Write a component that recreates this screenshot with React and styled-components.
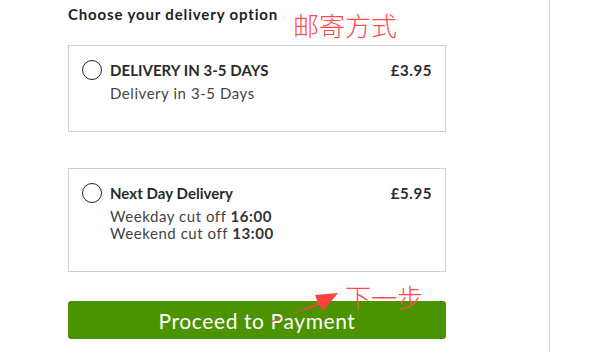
import React from 'react';
import styled, { createGlobalStyle } from 'styled-components';

const GlobalStyle = createGlobalStyle`
  html, body {
    margin: 0;
    padding: 0;
    background: #fff;
  }
  body {
    font-family: "Lato", "Liberation Sans", sans-serif;
    color: #333;
  }
`;

const Page = styled.div`
  display: flex;
  width: 606px;
  height: 352px;
  overflow: hidden;
  position: relative;
`;

const Main = styled.div`
  width: 550px;
  height: 352px;
  border-right: 1px solid #cfcfcf;
  box-sizing: border-box;
  padding: 5px 0 0 68px;
`;

const Heading = styled.h3`
  margin: 0;
  font-size: 15px;
  font-weight: 700;
  letter-spacing: 0.85px;
  color: #222;
  line-height: 18px;
`;

const Options = styled.div`
  display: flex;
  flex-direction: column;
  gap: 36px;
  width: 378px;
  margin-top: 22px;
`;

const OptionBox = styled.label`
  display: flex;
  align-items: flex-start;
  gap: 8px;
  box-sizing: border-box;
  height: ${p => p.$h}px;
  border: 1px solid #cfcfcf;
  padding: 14px 13px 0 13px;
  cursor: pointer;
`;

const Radio = styled.span`
  flex: none;
  width: 18px;
  height: 18px;
  border: 1.5px solid #222;
  border-radius: 50%;
`;

const Body = styled.div`
  flex: 1;
  display: flex;
  flex-direction: column;
`;

const TitleRow = styled.div`
  display: flex;
  justify-content: space-between;
  align-items: center;
  height: 20px;
`;

const Title = styled.span`
  font-size: 15px;
  font-weight: 700;
  color: #2a2a2a;
  letter-spacing: 0.05px;
`;

const Price = styled.span`
  font-size: 15px;
  font-weight: 700;
  color: #2a2a2a;
  letter-spacing: 0.6px;
`;

const Detail = styled.div`
  margin-top: ${p => p.$mt || 4}px;
  font-size: 15px;
  line-height: 17px;
  color: #444;
  letter-spacing: 0.55px;
  b {
    font-weight: 700;
    color: #333;
  }
`;

const Button = styled.button`
  display: block;
  width: 378px;
  height: 38px;
  margin-top: 29px;
  border: none;
  border-radius: 3px;
  background: #4b9300;
  color: #fff;
  font-family: "Lato", "Liberation Sans", sans-serif;
  font-size: 21px;
  font-weight: 400;
  letter-spacing: 0.6px;
  cursor: pointer;
`;

const Note = styled.span`
  position: absolute;
  left: ${p => p.$x}px;
  top: ${p => p.$y}px;
  font-family: "Noto Sans CJK SC", sans-serif;
  font-weight: 300;
  font-size: ${p => p.$size}px;
  line-height: 1;
  color: #ff4a4a;
  pointer-events: none;
`;

const ArrowSvg = styled.svg`
  position: absolute;
  left: 0;
  top: 0;
  pointer-events: none;
`;

function Option({ title, price, height, children }) {
  return (
    <OptionBox $h={height}>
      <Radio />
      <Body>
        <TitleRow>
          <Title>{title}</Title>
          <Price>{price}</Price>
        </TitleRow>
        {children}
      </Body>
    </OptionBox>
  );
}

export default function App() {
  return (
    <Page>
      <GlobalStyle />
      <Main>
        <Heading>Choose your delivery option</Heading>
        <Options>
          <Option title="DELIVERY IN 3-5 DAYS" price="£3.95" height={87}>
            <Detail $mt={5}>Delivery in 3-5 Days</Detail>
          </Option>
          <Option title="Next Day Delivery" price="£5.95" height={104}>
            <Detail $mt={5}>
              Weekday cut off <b>16:00</b>
              <br />
              Weekend cut off <b>13:00</b>
            </Detail>
          </Option>
        </Options>
        <Button>Proceed to Payment</Button>
      </Main>
      <Note $x={293} $y={12} $size={26}>邮寄方式</Note>
      <Note $x={345} $y={284} $size={26}>下一步</Note>
      <ArrowSvg width="606" height="352" viewBox="0 0 606 352">
        <polygon points="270,323 318,303 315,295 338,293 323,311 320,305 271,321" fill="#ff4040" />
      </ArrowSvg>
    </Page>
  );
}
